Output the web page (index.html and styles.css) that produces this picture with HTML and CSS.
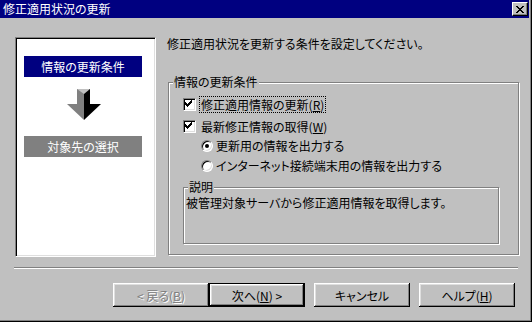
FILE: index.html
```html
<!DOCTYPE html>
<html lang="ja">
<head>
	<meta charset="UTF-8">
	<title>修正適用状況の更新</title>
	<link rel="stylesheet" href="styles.css">
</head>
<body>
	<div class="titlebar">
		<div class="title">修正適用状況の更新</div>
		<div class="close">
			<svg width="8" height="7" viewBox="0 0 8 7"><path d="M0 0h2v1H0zM6 0h2v1H6zM1 1h2v1H1zM5 1h2v1H5zM2 2h4v1H2zM3 3h2v1H3zM2 4h4v1H2zM1 5h2v1H1zM5 5h2v1H5zM0 6h2v1H0zM6 6h2v1H6z" fill="#000"/></svg>
		</div>
	</div>
	<div class="body">
		<div class="top">
			<div class="steps">
				<div class="step current">情報の更新条件</div>
				<svg class="arrow" width="34" height="32" viewBox="0 0 34 32">
					<polygon points="10,0 17,0 17,16 10,16" fill="#808080"/>
					<polygon points="17,0 23,0 23,16 17,16" fill="#000"/>
					<polygon points="10,0 23,0 17,5" fill="#c0c0c0"/>
					<polygon points="0,15 17,15 17,31" fill="#808080"/>
					<polygon points="17,15 34,15 17,31" fill="#000"/>
				</svg>
				<div class="step next">対象先の選択</div>
			</div>
			<div class="main">
				<p class="lead">修正適用状況を更新する条件を設定してください。</p>
				<div class="group">
					<span class="legend">情報の更新条件</span>
					<div class="row row-first">
						<span class="checkbox"><svg width="7" height="7" viewBox="0 0 7 7"><path d="M0 2h1v3H0zM1 3h1v3H1zM2 4h1v3H2zM3 3h1v3H3zM4 2h1v3H4zM5 1h1v3H5zM6 0h1v3H6z" fill="#000"/></svg></span>
						<span class="label focus">修正適用情報の更新(<u>R</u>)</span>
					</div>
					<div class="row row-second">
						<span class="checkbox"><svg width="7" height="7" viewBox="0 0 7 7"><path d="M0 2h1v3H0zM1 3h1v3H1zM2 4h1v3H2zM3 3h1v3H3zM4 2h1v3H4zM5 1h1v3H5zM6 0h1v3H6z" fill="#000"/></svg></span>
						<span class="label">最新修正情報の取得(<u>W</u>)</span>
					</div>
					<div class="row row-radio">
						<span class="radio checked"></span>
						<span class="label">更新用の情報を出力する</span>
					</div>
					<div class="row row-radio row-last">
						<span class="radio"></span>
						<span class="label">インターネット接続端末用の情報を出力する</span>
					</div>
					<div class="group sub">
						<span class="legend">説明</span>
						<p class="desc">被管理対象サーバから修正適用情報を取得します。</p>
					</div>
				</div>
			</div>
		</div>
		<div class="sep"></div>
		<div class="buttons">
			<button class="btn" disabled>&lt; 戻る(<u>B</u>)</button>
			<button class="btn default">次へ(<u>N</u>) &gt;</button>
			<button class="btn gap">キャンセル</button>
			<button class="btn gap">ヘルプ(<u>H</u>)</button>
		</div>
	</div>
</body>
</html>
```

FILE: styles.css
```css
/*
  Wizard dialog, classic gray look.
*/
* {
	box-sizing: border-box;
}

body {
	margin: 0;
	width: 532px;
	height: 322px;
	background: #c0c0c0;
	font-family: "Noto Sans CJK JP", sans-serif;
	font-size: 12px;
	color: #000;
	border-right: 1px solid #000;
	border-bottom: 1px solid #000;
	box-shadow: inset -1px -1px #808080;
	overflow: hidden;
}

.titlebar {
	height: 18px;
	width: 529px;
	background: #000080;
	display: grid;
	grid-template-columns: 1fr 16px;
	align-items: center;
	padding: 0 1px 0 3px;
}

.title {
	color: #fff;
	line-height: 18px;
	font-feature-settings: "palt";
}

.close {
	width: 16px;
	height: 14px;
	background: #c0c0c0;
	display: flex;
	align-items: center;
	justify-content: center;
	border-top: 1px solid #fff;
	border-left: 1px solid #fff;
	border-right: 1px solid #000;
	border-bottom: 1px solid #000;
	box-shadow: inset -1px -1px #808080;
}

.body {
	padding-left: 15px;
}

.top {
	display: flex;
	padding-top: 19px;
}

/* left step panel */
.steps {
	width: 141px;
	height: 220px;
	background: #fff;
	border: 1px solid;
	border-color: #808080 #fff #fff #808080;
	box-shadow: inset 1px 1px #000, inset -1px -1px #dfdfdf;
	padding: 18px 0 0 8px;
	display: flex;
	flex-direction: column;
}

.step {
	width: 118px;
	height: 21px;
	line-height: 21px;
	text-align: center;
	color: #fff;
	font-feature-settings: "palt";
}

.step.current {
	background: #000080;
}

.step.next {
	background: #808080;
	margin-top: 15px;
}

.arrow {
	display: block;
	margin: 12px 0 0 43px;
}

/* right side */
.main {
	margin-left: 11px;
}

.lead,
.desc,
.label,
.legend {
	font-feature-settings: "palt";
}

.lead {
	margin: 0;
	line-height: 14px;
}

.group {
	position: relative;
	width: 351px;
	height: 173px;
	margin: 31px 0 0 1px;
	border: 1px solid #808080;
	box-shadow: inset 1px 1px #fff, 1px 1px #fff;
	padding: 15px 0 0 14px;
}

.legend {
	position: absolute;
	left: 4px;
	top: -8px;
	padding: 0 1px;
	background: #c0c0c0;
	line-height: 14px;
}

.row {
	display: flex;
	align-items: center;
	height: 13px;
}

.row-second {
	margin-top: 9px;
}

.row-radio {
	margin-top: 6px;
	padding-left: 18px;
}

.row-last {
	margin-top: 7px;
}

.checkbox {
	width: 13px;
	height: 13px;
	flex: none;
	background: #fff;
	border: 1px solid;
	border-color: #808080 #fff #fff #808080;
	box-shadow: inset 1px 1px #000, inset -1px -1px #dfdfdf;
	padding: 1px 0 0 1px;
}

.checkbox svg {
	display: block;
}

.radio {
	position: relative;
	width: 12px;
	height: 12px;
	flex: none;
	border-radius: 50%;
	background: #fff;
	border: 1px solid;
	border-color: #808080 #fff #fff #808080;
	box-shadow: inset 1px 1px #000, inset -1px -1px #dfdfdf;
}

.radio.checked::after {
	content: "";
	position: absolute;
	left: 3px;
	top: 3px;
	width: 4px;
	height: 4px;
	border-radius: 50%;
	background: #000;
}

.label {
	margin-left: 5px;
	line-height: 14px;
	white-space: nowrap;
}

.row-radio .label {
	margin-left: 3px;
}

.label.focus {
	margin-left: 4px;
	padding: 1px 1px 0;
	outline: 1px dotted #000;
}

.group.sub {
	width: 316px;
	height: 57px;
	margin: 15px 0 0 0;
	padding: 8px 0 0 2px;
}

.desc {
	margin: 0;
	line-height: 14px;
}

.sep {
	width: 504px;
	height: 2px;
	margin: 10px 0 0 -1px;
	border-top: 1px solid #808080;
	border-bottom: 1px solid #fff;
}

.buttons {
	display: flex;
	margin: 14px 0 0 98px;
}

.btn {
	width: 96px;
	height: 24px;
	padding: 0;
	border: none;
	background: #c0c0c0;
	font: inherit;
	font-feature-settings: "palt";
	color: #000;
	box-shadow: inset -1px -1px #000, inset 1px 1px #fff, inset -2px -2px #808080, inset 2px 2px #dfdfdf;
}

.btn.default {
	border: 1px solid #000;
}

.btn.gap {
	margin-left: 9px;
}

.btn:disabled {
	color: #808080;
	text-shadow: 1px 1px #fff;
}
```
